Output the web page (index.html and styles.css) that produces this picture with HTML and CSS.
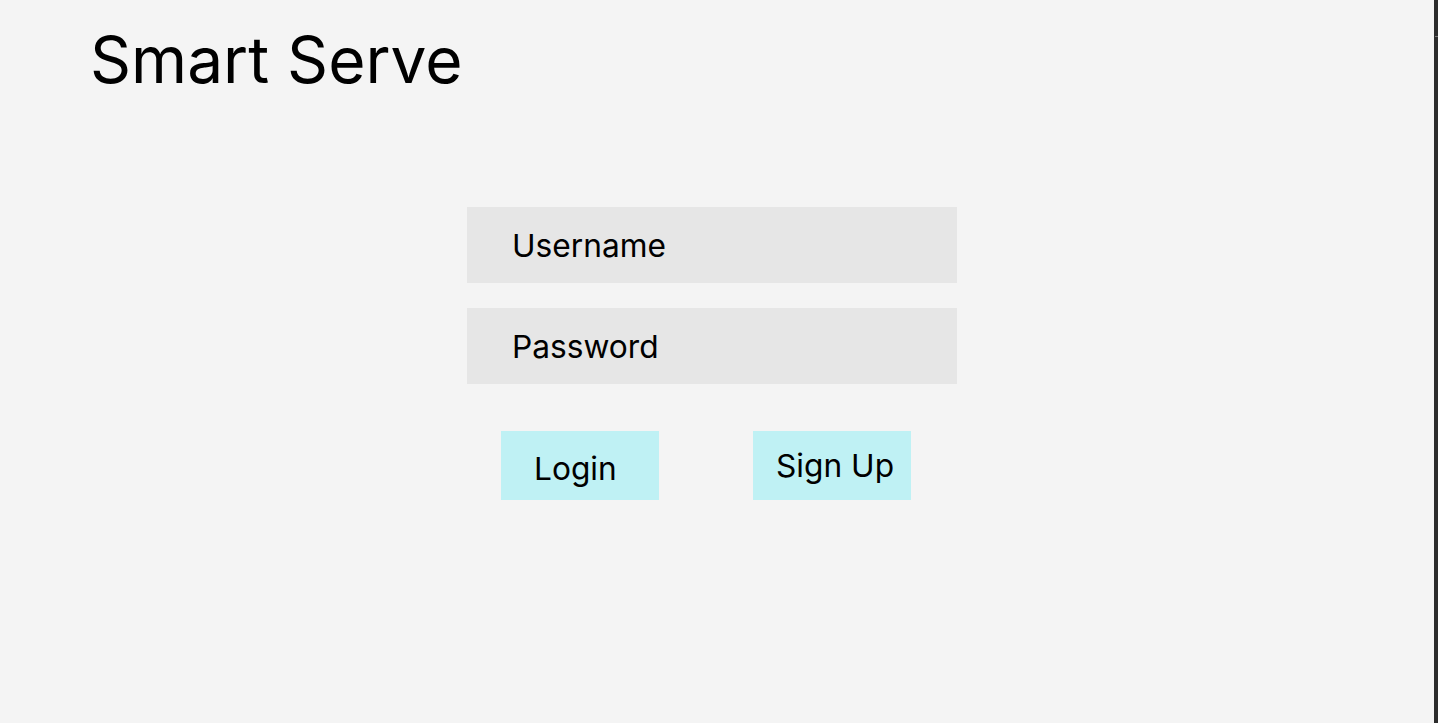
FILE: index.html
```html
<!DOCTYPE html>
<html>
<head>
<meta charset="utf-8">
<link rel="stylesheet" href="styles.css">
</head>
<body>
<div class="app">
  <main class="page">
    <h1 class="title">Smart Serve</h1>
    <form class="login-form">
      <div class="field">Username</div>
      <div class="field">Password</div>
      <div class="actions">
        <button type="button" class="btn btn-login">Login</button>
        <button type="button" class="btn btn-signup">Sign Up</button>
      </div>
    </form>
  </main>
  <aside class="edge"><span class="edge-tick"></span></aside>
</div>
</body>
</html>
```
FILE: styles.css
```css
html, body {
  margin: 0;
  padding: 0;
  height: 100%;
}
body {
  background: #f4f4f4;
  font-family: Inter, "Noto Sans", sans-serif;
  color: #000;
}
.app {
  display: flex;
  height: 100%;
}
.page {
  flex: 1;
  padding: 0 0 0 90px;
}
.title {
  margin: 22px 0 0 0;
  font-size: 64px;
  font-weight: 400;
  line-height: 76px;
  letter-spacing: 0;
}
.login-form {
  margin: 109px 0 0 377px;
  width: 490px;
  display: flex;
  flex-direction: column;
  gap: 25px;
}
.field {
  background: #e6e6e6;
  height: 76px;
  display: flex;
  align-items: center;
  padding-left: 45px;
  font-size: 31.7px;
  box-sizing: border-box;
}
.actions {
  display: flex;
  gap: 94px;
  padding-left: 34px;
  margin-top: 22px;
}
.btn {
  width: 158px;
  height: 69px;
  border: 0;
  background: #bff1f4;
  font-family: Inter, "Noto Sans", sans-serif;
  font-size: 31.7px;
  color: #000;
  text-align: left;
  padding: 0;
  display: flex;
  align-items: center;
}
.btn-login {
  padding: 6px 0 0 33px;
}
.btn-signup {
  padding: 0 0 0 23px;
}
.edge {
  width: 4px;
  background: #2c2c2c;
  position: relative;
}
.edge-tick {
  position: absolute;
  left: 1px;
  top: 36px;
  width: 3px;
  height: 1px;
  background: #777;
}
```
